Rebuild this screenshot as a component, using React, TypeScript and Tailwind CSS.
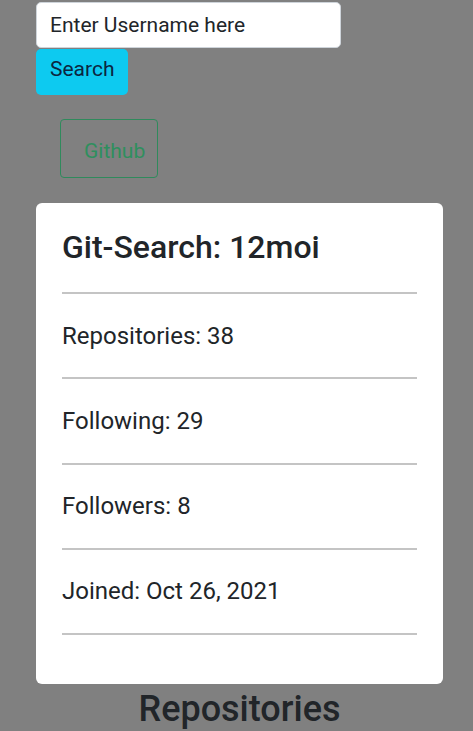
import React from 'react';

const stats = [
  { label: 'Repositories', value: '38' },
  { label: 'Following', value: '29' },
  { label: 'Followers', value: '8' },
  { label: 'Joined', value: 'Oct 26, 2021' },
];

const App = () => {
  return (
    <div
      className="min-h-screen bg-[#808080] pt-[2px] text-[#212529]"
      style={{ fontFamily: 'Roboto, "Noto Sans", sans-serif' }}
    >
      <div className="ml-[36px] w-[407px]">
        <input
          type="text"
          placeholder="Enter Username here"
          className="block h-[46px] w-[305px] rounded-[5px] border border-[#ced4da] bg-white px-[13px] text-[21px] text-[#212529] placeholder:text-[#212529] outline-none"
        />
        <button className="mt-[1px] block h-[46px] w-[92px] rounded-[5px] bg-[#0dcaf0] px-[14px] pb-[5px] text-left text-[21px] text-[#0b2540]">
          Search
        </button>

        <a
          href="#"
          className="ml-[24px] mt-[24px] flex h-[59px] w-[98px] items-center rounded-[4px] border border-[#2f8a5c] pl-[23px] pt-[6px] text-[21px] text-[#2f8f5e]"
        >
          Github
        </a>

        <div className="mt-[25px] rounded-[6px] bg-white px-[26px] pb-[49px] pt-[26px]">
          <h1 className="text-[32px] font-medium leading-[36px]">Git-Search: 12moi</h1>
          <div className="mt-[27px] h-[2px] bg-[#c4c4c4]" />
          {stats.map((s) => (
            <div key={s.label}>
              <div className="flex h-[83.25px] items-center text-[24px]">
                {s.label}: {s.value}
              </div>
              <div className="h-[2px] bg-[#c4c4c4]" />
            </div>
          ))}
        </div>

        <h2 className="mt-[4px] text-center text-[36px] font-medium leading-[43px]">
          Repositories
        </h2>
      </div>
    </div>
  );
};

export default App;
